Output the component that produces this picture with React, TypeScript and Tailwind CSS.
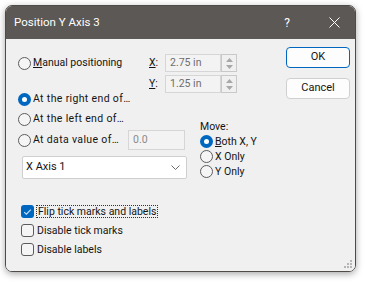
import React from "react";

const font = { fontFamily: "Roboto, 'Noto Sans', sans-serif" };

function Radio({ checked }: { checked?: boolean }) {
  if (checked) {
    return (
      <span className="w-[13px] h-[13px] rounded-full bg-[#0067c0] flex items-center justify-center shrink-0">
        <span className="w-[5px] h-[5px] rounded-full bg-white" />
      </span>
    );
  }
  return <span className="w-[13px] h-[13px] rounded-full border border-[#5c5c5c] bg-[#f5f5f5] shrink-0" />;
}

function Check({ checked }: { checked?: boolean }) {
  if (checked) {
    return (
      <span className="w-[13px] h-[13px] rounded-[3px] bg-[#0067c0] flex items-center justify-center shrink-0">
        <svg width="9" height="8" viewBox="0 0 9 8">
          <path d="M1.2 4.2 L3.4 6.2 L7.8 1.6" fill="none" stroke="#cfe3f5" strokeWidth="1.1" />
        </svg>
      </span>
    );
  }
  return <span className="w-[13px] h-[13px] rounded-[3px] border border-[#5c5c5c] bg-[#f5f5f5] shrink-0" />;
}

function Spin() {
  return (
    <div className="w-[16px] h-[18px] border border-[#c9c9c9] bg-[#f0f0f0] flex flex-col items-center justify-center gap-[3px]">
      <svg width="7" height="4" viewBox="0 0 7 4">
        <path d="M0 4 L3.5 0 L7 4 Z" fill="#a8a8a8" />
      </svg>
      <svg width="7" height="4" viewBox="0 0 7 4">
        <path d="M0 0 L3.5 4 L7 0 Z" fill="#a8a8a8" />
      </svg>
    </div>
  );
}

function Field({ value }: { value: string }) {
  return (
    <div className="w-[56px] h-[18px] border border-[#d6d6d6] bg-[#f3f3f3] text-[#6d6d6d] flex items-center pl-[4px]">
      {value}
    </div>
  );
}

export default function App() {
  return (
    <div className="w-[366px] h-[282px] bg-white pt-[5px] pl-[5px] text-[10.5px] text-[#141414]" style={font}>
      <div className="w-[351px] h-[267px] rounded-[7px] overflow-hidden flex flex-col border border-[#4e4b49] shadow-[0_2px_7px_rgba(0,0,0,0.35)] relative">
        {/* Title bar */}
        <div className="h-[33px] bg-[#5c5855] flex items-center pl-[8px] text-white shrink-0">
          <span className="text-[11.5px] flex-1">Position Y Axis 3</span>
          <span className="text-[12px] w-[12px] text-center mr-[36px]">?</span>
          <svg width="11" height="11" viewBox="0 0 11 11" className="mr-[15px]">
            <path d="M0.5 0.5 L10.5 10.5 M10.5 0.5 L0.5 10.5" stroke="white" strokeWidth="1" />
          </svg>
        </div>

        {/* Body */}
        <div className="flex-1 bg-[#f0f0f0] flex">
          <div className="flex-1 pl-[12px] pt-[15px]">
            {/* Manual positioning + X/Y */}
            <div className="flex items-start">
              <label className="w-[131px] h-[18px] flex items-center gap-[2px]">
                <Radio />
                <span>
                  <u>M</u>anual positioning
                </span>
              </label>
              <div className="flex flex-col gap-[3px]">
                <div className="flex items-center">
                  <span className="w-[16px]">
                    <u>X</u>:
                  </span>
                  <Field value="2.75 in" />
                  <Spin />
                </div>
                <div className="flex items-center">
                  <span className="w-[16px]">
                    <u>Y</u>:
                  </span>
                  <Field value="1.25 in" />
                  <Spin />
                </div>
              </div>
            </div>

            <div className="flex">
              {/* Column A */}
              <div className="w-[182px]">
                <label className="h-[14px] mt-[-1px] flex items-center gap-[2px]">
                  <Radio checked />
                  <span className="tracking-[0.35px]">At the right end of…</span>
                </label>
                <label className="h-[14px] mt-[6px] flex items-center gap-[2px]">
                  <Radio />
                  <span className="tracking-[0.35px]">At the left end of…</span>
                </label>
                <div className="h-[20px] mt-[4px] flex items-center">
                  <label className="w-[110px] flex items-center gap-[2px]">
                    <Radio />
                    <span className="whitespace-nowrap tracking-[0.35px]">At data value of…</span>
                  </label>
                  <div className="w-[57px] h-[20px] border border-[#d6d6d6] bg-[#f3f3f3] text-[#8a8a8a] flex items-center pl-[4px]">
                    0.0
                  </div>
                </div>
                <div className="ml-[4px] mt-[6px] w-[165px] h-[23px] bg-white border border-[#cfcfcf] rounded-[2px] flex items-center pl-[3px] pr-[6px]">
                  <span className="flex-1 text-[11px]">X Axis 1</span>
                  <svg width="9" height="5" viewBox="0 0 9 5">
                    <path d="M0.5 0.5 L4.5 4.5 L8.5 0.5" fill="none" stroke="#6a6a6a" strokeWidth="1" />
                  </svg>
                </div>
              </div>

              {/* Column B: Move */}
              <div className="pt-[27px]">
                <div className="h-[14px] flex items-center">Move:</div>
                <label className="h-[15px] flex items-center gap-[2px]">
                  <Radio checked />
                  <span>
                    <u>B</u>oth X, Y
                  </span>
                </label>
                <label className="h-[15px] flex items-center gap-[2px]">
                  <Radio />
                  <span>X Only</span>
                </label>
                <label className="h-[15px] flex items-center gap-[2px]">
                  <Radio />
                  <span>Y Only</span>
                </label>
              </div>
            </div>

            {/* Checkboxes */}
            <div className="mt-[23px] ml-[3px]">
              <label className="h-[19px] flex items-center gap-[2px]">
                <Check checked />
                <span className="border border-dotted border-[#333] px-[1px] leading-[11px]">
                  Flip tick marks and labels
                </span>
              </label>
              <label className="h-[19px] flex items-center gap-[3px]">
                <Check />
                <span>Disable tick marks</span>
              </label>
              <label className="h-[19px] flex items-center gap-[3px]">
                <Check />
                <span>Disable labels</span>
              </label>
            </div>
          </div>

          {/* Buttons */}
          <div className="w-[64px] mr-[5px] pt-[8px] flex flex-col gap-[10px]">
            <button className="h-[21px] rounded-[4px] border-[1.5px] border-[#0067c0] bg-[#fdfdfd] text-[11px]">
              OK
            </button>
            <button className="h-[21px] rounded-[4px] border border-[#d0d0d0] bg-[#fdfdfd] text-[11px]">
              Cancel
            </button>
          </div>
        </div>

        {/* Resize grip */}
        <div className="absolute right-[3px] bottom-[3px] grid grid-cols-3 gap-[1px]">
          <span className="w-[2px] h-[2px]" />
          <span className="w-[2px] h-[2px]" />
          <span className="w-[2px] h-[2px] bg-[#b5b5b5]" />
          <span className="w-[2px] h-[2px]" />
          <span className="w-[2px] h-[2px] bg-[#b5b5b5]" />
          <span className="w-[2px] h-[2px] bg-[#b5b5b5]" />
          <span className="w-[2px] h-[2px] bg-[#b5b5b5]" />
          <span className="w-[2px] h-[2px] bg-[#b5b5b5]" />
          <span className="w-[2px] h-[2px] bg-[#b5b5b5]" />
        </div>
      </div>
    </div>
  );
}
